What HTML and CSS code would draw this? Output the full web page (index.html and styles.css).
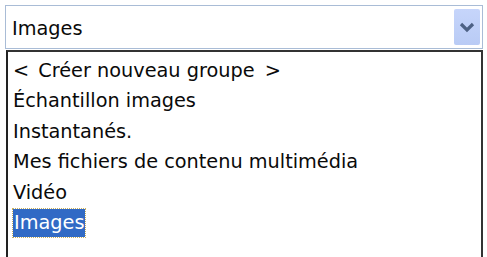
FILE: index.html
```html
<!DOCTYPE html>
<html>
<head>
<meta charset="utf-8">
<link rel="stylesheet" href="styles.css">
</head>
<body>
<div class="combo">
  <div class="field">
    <span class="value">Images</span>
    <span class="btn">
      <svg width="16" height="12" viewBox="0 0 16 12"><path d="M2 3 L8 9 L14 3" fill="none" stroke="#4d6185" stroke-width="3.2"/></svg>
    </span>
  </div>
  <ul class="list">
    <li><span class="ang-l">&lt;</span> Créer nouveau groupe <span class="ang-r">&gt;</span></li>
    <li>Échantillon images</li>
    <li>Instantanés.</li>
    <li>Mes fichiers de contenu multimédia</li>
    <li>Vidéo</li>
    <li><span class="sel">Images</span></li>
  </ul>
</div>
</body>
</html>
```
FILE: styles.css
```css
html, body { margin: 0; padding: 0; background: #fff; }
body { width: 487px; height: 257px; overflow: hidden; font-family: "DejaVu Sans", Verdana, sans-serif; font-size: 19.3px; color: #0a0a0a; }
.combo { padding: 5px 4px 0 5px; }
.field {
  border: 1px solid #a9bcd6;
  display: flex;
  align-items: center;
  justify-content: space-between;
  box-sizing: border-box;
  height: 44px;
}
.value { padding-left: 6px; padding-top: 2px; }
.btn {
  width: 26px; height: 36px; margin-right: 2px;
  background: linear-gradient(#c6d5fb, #b9cbf5);
  border-radius: 2px;
  display: flex; align-items: center; justify-content: center;
}
.list {
  list-style: none; margin: 1px 0 0 1px; padding: 4px 0 0 5px;
  border-top: 2px solid #333; border-left: 2px solid #222; border-right: 2px solid #333;
  height: 207px; box-sizing: border-box; width: 477px;
}
.list li { height: 30.4px; line-height: 30px; }
.ang-l { display: inline-block; padding-right: 3px; }
.ang-r { display: inline-block; padding-left: 4px; }
.sel { background: #316ac5; color: #fff; outline: 1px dotted #c9b060; display: inline-block; line-height: 28px; padding: 0 1px; }
```
